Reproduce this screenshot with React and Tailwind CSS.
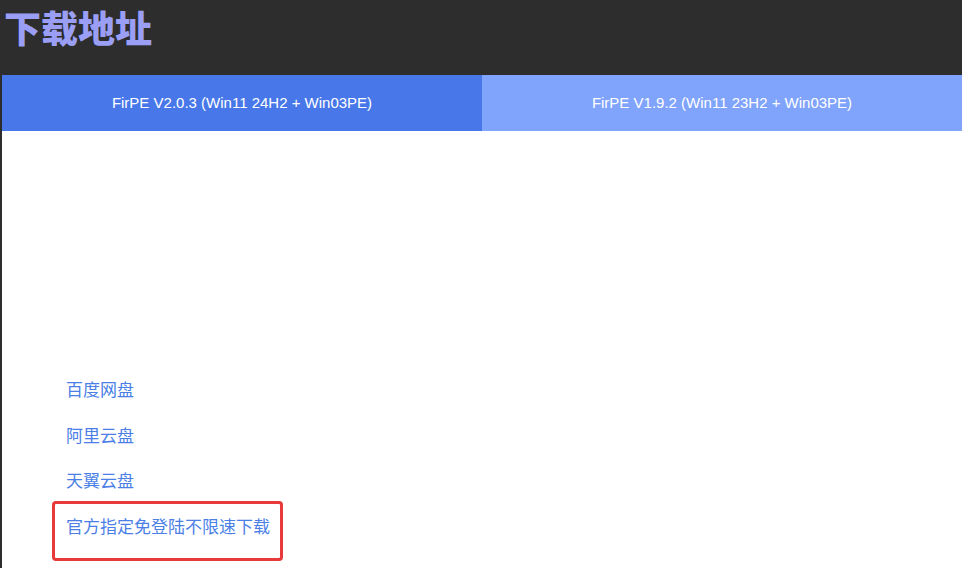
import React from "react";

const tabs = [
  { label: "FirPE V2.0.3 (Win11 24H2 + Win03PE)", active: true },
  { label: "FirPE V1.9.2 (Win11 23H2 + Win03PE)", active: false },
];

const links = ["百度网盘", "阿里云盘", "天翼云盘"];

const App = () => {
  return (
    <div className="w-[962px] h-[568px] overflow-hidden bg-[#2d2d2d] font-['Liberation_Sans','Noto_Sans_CJK_SC',sans-serif]">
      <div className="h-[75px] pl-[4px]">
        <h1 className="text-[37px] leading-normal font-black text-[#9a9ff5] font-['Noto_Sans_CJK_SC',sans-serif]">
          下载地址
        </h1>
      </div>

      <div className="ml-[2px] w-[960px] h-[493px] bg-white flex flex-col">
        <div className="flex h-[56px]">
          {tabs.map((t) => (
            <div
              key={t.label}
              className={`flex-1 flex items-center justify-center text-[15px] text-white ${
                t.active ? "bg-[#4777e8]" : "bg-[#80a3fb]"
              }`}
            >
              {t.label}
            </div>
          ))}
        </div>

        <div className="flex flex-col gap-[21.5px] pt-[246px] pl-[64px] text-[17px] leading-[24px] text-[#4b7fe6] font-['Noto_Sans_CJK_SC',sans-serif]">
          {links.map((l) => (
            <a key={l} className="w-fit cursor-pointer">
              {l}
            </a>
          ))}
          <span className="relative w-fit">
            <a className="cursor-pointer">官方指定免登陆不限速下载</a>
            <span className="absolute -left-[14px] -top-[13px] w-[231px] h-[60px] border-[3px] border-[#e8393b] rounded-[4px] pointer-events-none" />
          </span>
        </div>
      </div>
    </div>
  );
};

export default App;
